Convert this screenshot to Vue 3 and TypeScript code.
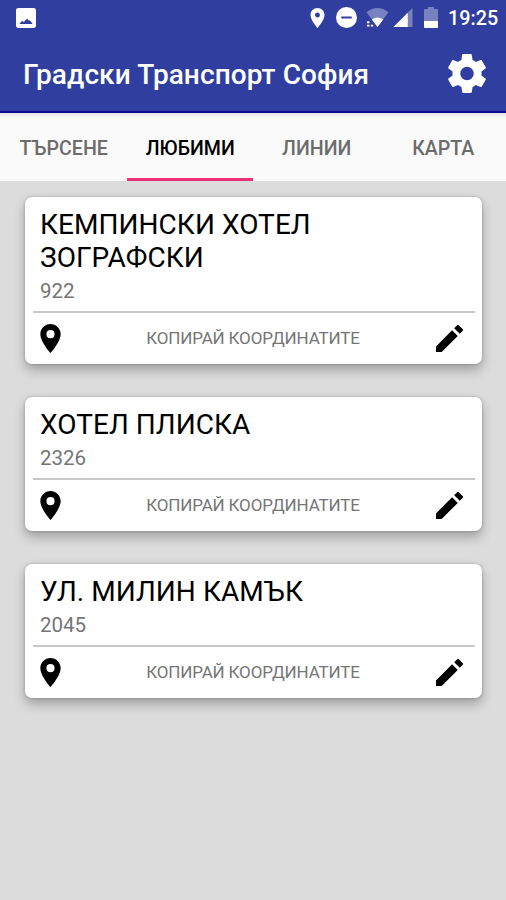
<script setup lang="ts">
interface Stop {
  name: string
  code: string
}

const tabs: string[] = ['ТЪРСЕНЕ', 'ЛЮБИМИ', 'ЛИНИИ', 'КАРТА']
const activeTab = 'ЛЮБИМИ'
const stops: Stop[] = [
  { name: 'КЕМПИНСКИ ХОТЕЛ ЗОГРАФСКИ', code: '922' },
  { name: 'ХОТЕЛ ПЛИСКА', code: '2326' },
  { name: 'УЛ. МИЛИН КАМЪК', code: '2045' },
]
</script>

<template>
  <div class="screen">
    <header class="header">
      <div class="status">
        <svg class="photo" viewBox="3 3 18 18"><path fill="currentColor" d="M21 19V5c0-1.100-.9-2-2-2H5c-1.100 0-2 .9-2 2v14c0 1.100.9 2 2 2h14c1.100 0 2-.9 2-2zM6 17.500l2.500-3 1.500 1 3-3 1.500 2 1-.5 2.500 3.500z" /></svg>
        <svg class="location" viewBox="5 2 14 20"><path fill="currentColor" d="M12 2C8.130 2 5 5.130 5 9c0 5.250 7 13 7 13s7-7.750 7-13c0-3.870-3.130-7-7-7zm0 9.500a2.500 2.500 0 0 1 0-5 2.500 2.500 0 0 1 0 5z" /></svg>
        <svg class="dnd" viewBox="2 2 20 20"><path fill="currentColor" d="M12 2a10 10 0 1 0 0 20 10 10 0 0 0 0-20zm5 11H7v-2h10z" /></svg>
        <svg class="wifi" viewBox="0 0 25 20">
          <path fill="currentColor" opacity=".35" d="M1 4.500C8-1.500 17-1.500 24 4.500L12.500 20z" />
          <path fill="currentColor" d="M6.500 12q6-4 12 0l-6 8z" />
          <path fill="currentColor" d="M1.500 14H4v2H1.500zM1.500 17.500H4v2H1.500zM5.500 17.500H8v2H5.500z" />
        </svg>
        <svg class="signal" viewBox="0 0 20 20"><path fill="currentColor" opacity=".35" d="M0 20 20 0v20z" /><path fill="currentColor" d="M0 20 15 5v15z" /></svg>
        <svg class="battery" viewBox="0 0 14 21"><path fill="currentColor" opacity=".35" d="M1 2h3V0h6v2h3q1 0 1 1v11H0V3q0-1 1-1z" /><path fill="currentColor" d="M0 14h14v6q0 1-1 1H1q-1 0-1-1z" /></svg>
        <span class="clock">19:25</span>
      </div>
      <div class="toolbar">
        <h1 class="app-title">Градски Транспорт София</h1>
        <svg class="gear" viewBox="2.2 2 19.600 20"><path fill="currentColor" d="M19.430 12.980c.04-.32.07-.64.07-.98s-.03-.66-.07-.98l2.110-1.650c.19-.15.24-.42.12-.64l-2-3.460c-.12-.22-.39-.3-.61-.22l-2.490 1c-.52-.4-1.080-.73-1.690-.98l-.38-2.650C14.460 2.180 14.250 2 14 2h-4c-.25 0-.46.18-.49.42l-.38 2.650c-.61.25-1.170.59-1.690.98l-2.490-1c-.23-.09-.49 0-.61.22l-2 3.460c-.13.22-.07.49.12.64l2.110 1.650c-.04.32-.07.65-.07.98s.03.66.07.98l-2.110 1.650c-.19.15-.24.42-.12.64l2 3.460c.12.22.39.3.61.22l2.490-1c.52.4 1.080.73 1.690.98l.38 2.650c.03.24.24.42.49.42h4c.25 0 .46-.18.49-.42l.38-2.650c.61-.25 1.170-.59 1.690-.98l2.490 1c.23.09.49 0 .61-.22l2-3.460c.12-.22.07-.49-.12-.64zM12 15.500a3.500 3.500 0 1 1 0-7 3.500 3.500 0 0 1 0 7z" /></svg>
      </div>
    </header>
    <nav class="tabs">
      <button v-for="tab in tabs" :key="tab" type="button" class="tab" :class="{ active: tab === activeTab }">{{ tab }}</button>
    </nav>
    <main class="list">
      <article v-for="stop in stops" :key="stop.code" class="card">
        <div class="info">
          <h2 class="name">{{ stop.name }}</h2>
          <p class="code">{{ stop.code }}</p>
        </div>
        <div class="actions">
          <svg class="pin" viewBox="5 2 14 20"><path fill="currentColor" d="M12 2C8.130 2 5 5.130 5 9c0 5.250 7 13 7 13s7-7.750 7-13c0-3.870-3.130-7-7-7zm0 9.800a2.800 2.800 0 0 1 0-5.600 2.800 2.800 0 0 1 0 5.600z" /></svg>
          <button type="button" class="copy">КОПИРАЙ КООРДИНАТИТЕ</button>
          <svg class="pencil" viewBox="3 3 18 18"><path fill="currentColor" d="M3 17.250V21h3.750L17.500 10.250l-3.750-3.750zM20.710 7.040a1 1 0 0 0 0-1.410l-2.340-2.340a1 1 0 0 0-1.410 0l-1.830 1.830 3.750 3.750z" /></svg>
        </div>
      </article>
    </main>
  </div>
</template>

<style>
body {
  margin: 0;
  background: #dcdcdc;
}
</style>

<style scoped>
.screen {
  display: flex;
  flex-direction: column;
  height: 900px;
  overflow: hidden;
  background: #dcdcdc;
  font-family: Roboto, "Liberation Sans", sans-serif;
}
svg {
  display: block;
  flex: none;
}
h1, h2, p {
  margin: 0;
  font-weight: 400;
}
button {
  padding: 0;
  border: 0;
  background: none;
  font-family: inherit;
}
.header {
  box-sizing: border-box;
  height: 113px;
  flex: none;
  background: #303f9f;
  border-bottom: 2px solid #0c0c92;
  color: #fff;
}
.status {
  display: flex;
  align-items: center;
  height: 35px;
  padding: 0 8px 0 16px;
}
.photo { width: 20px; height: 20px; }
.location { width: 15px; height: 20px; margin-left: auto; }
.dnd { width: 21px; height: 21px; margin-left: 11px; }
.wifi { width: 25px; height: 19px; margin-left: 8px; }
.signal { width: 20px; height: 19px; margin-left: 3px; }
.battery { width: 14px; height: 21px; margin-left: 11px; }
.clock {
  width: 50px;
  margin-left: 10px;
  padding-top: 2px;
  font-size: 19.800px;
  font-weight: 500;
  line-height: 34px;
  white-space: nowrap;
}
.toolbar {
  display: flex;
  align-items: center;
  justify-content: space-between;
  height: 78px;
  padding: 0 20px 0 23px;
}
.app-title {
  padding-top: 2px;
  font-size: 28px;
  font-weight: 500;
  letter-spacing: .08px;
  line-height: 34px;
  white-space: nowrap;
}
.gear { width: 38px; height: 39px; margin-top: -1px; }
.tabs {
  display: grid;
  grid-template-columns: repeat(4, 1fr);
  flex: none;
  height: 68px;
  background: linear-gradient(#e4e4e4, #fafafa 5px);
}
.tab {
  box-sizing: border-box;
  padding: 5px 0 0 1px;
  border-bottom: 3px solid transparent;
  color: #6c6c6c;
  font-size: 19.600px;
  font-weight: 500;
  white-space: nowrap;
}
.tab.active {
  border-color: #ee2f78;
  color: #000;
}
.list {
  display: flex;
  flex-direction: column;
  gap: 33.400px;
  padding: 16.400px 24px 0 25px;
}
.card {
  border-radius: 7px;
  background: #fff;
  box-shadow: 0 6px 12px rgba(0, 0, 0, .28), 0 0 3px rgba(0, 0, 0, .22);
}
.info {
  box-sizing: border-box;
  margin: 0 7px 0 8px;
  padding: 11px 90px 7px 7px;
  border-bottom: 2px solid #c8c8c8;
}
.name {
  color: #000;
  font-size: 28px;
  letter-spacing: .05px;
  line-height: 33px;
}
.code {
  margin-top: 3.600px;
  color: #757575;
  font-size: 20.500px;
  line-height: 26px;
}
.actions {
  display: flex;
  align-items: center;
  justify-content: space-between;
  height: 51px;
  padding: 0 19px 0 15px;
}
.pin { width: 21px; height: 29px; }
.pencil { width: 27px; height: 27px; }
.copy {
  margin-left: 9px;
  color: #757575;
  font-size: 17px;
  letter-spacing: -.16px;
  line-height: 24px;
  white-space: nowrap;
}
</style>
